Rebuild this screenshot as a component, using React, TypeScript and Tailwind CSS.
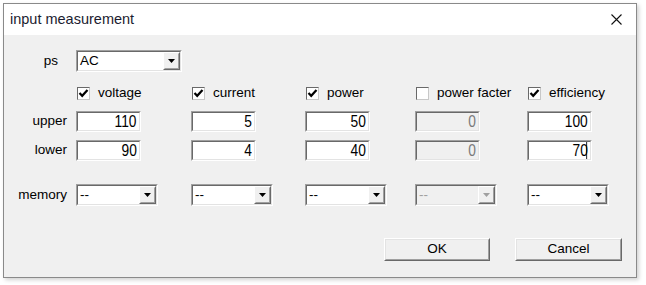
const ui = "font-['Liberation_Sans',Arial,sans-serif]";

const cols = "grid grid-cols-[115px_114px_110px_112px_auto]";

function Sunken({
  className = "",
  disabled = false,
  children,
}: {
  className?: string;
  disabled?: boolean;
  children?: React.ReactNode;
}) {
  return (
    <div
      className={`border border-t-[#a0a0a0] border-l-[#a0a0a0] border-b-white border-r-white ${className}`}
    >
      <div
        className={`h-full border border-t-[#696969] border-l-[#696969] border-b-[#e3e3e3] border-r-[#e3e3e3] ${
          disabled ? "bg-[#f0f0f0]" : "bg-white"
        }`}
      >
        {children}
      </div>
    </div>
  );
}

function Arrow({ disabled = false }: { disabled?: boolean }) {
  return (
    <div className="w-[17px] h-full border border-t-white border-l-white border-b-[#696969] border-r-[#696969] bg-[#f0f0f0]">
      <div className="h-full flex items-center justify-center border border-t-[#f0f0f0] border-l-[#f0f0f0] border-b-[#a0a0a0] border-r-[#a0a0a0]">
        <svg width="7" height="4" viewBox="0 0 7 4">
          <path d="M0 0H7L3.5 4Z" fill={disabled ? "#a0a0a0" : "#000"} />
        </svg>
      </div>
    </div>
  );
}

function Select({
  value,
  width,
  disabled = false,
}: {
  value: string;
  width: string;
  disabled?: boolean;
}) {
  return (
    <Sunken className={`${width} h-[22px]`} disabled={disabled}>
      <div className="h-full flex">
        <div
          className={`flex-1 flex items-center pl-[2px] text-[13.5px] ${
            disabled ? "text-[#a0a0a0]" : "text-black"
          }`}
        >
          {value}
        </div>
        <Arrow disabled={disabled} />
      </div>
    </Sunken>
  );
}

function NumBox({
  value,
  disabled = false,
  caret = false,
}: {
  value: string;
  disabled?: boolean;
  caret?: boolean;
}) {
  return (
    <Sunken className="w-[65px] h-[21px]" disabled={disabled}>
      <div
        className={`h-full flex items-center justify-end pr-[2px] text-[16px] leading-none ${
          disabled ? "text-[#7a7a7a]" : "text-black"
        }`}
      >
        <span className="relative inline-block origin-right scale-x-[0.86]">
          {value}
          {caret && (
            <span className="absolute right-[1px] top-[-1px] w-px h-[17px] bg-black" />
          )}
        </span>
      </div>
    </Sunken>
  );
}

function Check({ label, checked }: { label: string; checked: boolean }) {
  return (
    <div className="flex items-center ml-[1px] h-[13px]">
      <div className="w-[13px] h-[13px] border border-t-[#696969] border-l-[#696969] border-b-[#c8c8c8] border-r-[#c8c8c8] bg-white flex items-center justify-center">
        {checked && (
          <svg width="11" height="11" viewBox="0 0 11 11">
            <path d="M1.5 5L4.2 7.8L9.5 2" stroke="#000" strokeWidth="2.2" fill="none" />
          </svg>
        )}
      </div>
      <span className="ml-[8px] text-[13.5px] text-black">{label}</span>
    </div>
  );
}

function Button({ label, width }: { label: string; width: string }) {
  return (
    <div className={`${width} h-[23px] border border-t-white border-l-white border-b-[#696969] border-r-[#696969]`}>
      <div className="h-full flex items-center justify-center border border-t-[#e3e3e3] border-l-[#e3e3e3] border-b-[#a0a0a0] border-r-[#a0a0a0] bg-[#f0f0f0] text-[13.5px] text-black">
        {label}
      </div>
    </div>
  );
}

function Label({ text, pr = "pr-[9px]" }: { text: string; pr?: string }) {
  return (
    <div className={`w-[72px] shrink-0 text-right text-[13.5px] text-black ${pr}`}>{text}</div>
  );
}

export default function App() {
  return (
    <div className={`w-[646px] h-[285px] bg-white pt-[3px] pl-[3px] ${ui}`}>
      <div className="w-[634px] h-[275px] border border-[#8a8a8a] bg-[#f0f0f0] flex flex-col shadow-[2px_2px_4px_rgba(0,0,0,0.18)]">
        {/* title bar */}
        <div className="h-[31px] bg-white flex items-center justify-between pl-[6px] pr-[14px] shrink-0">
          <span className="text-[14.5px] text-[#1c1c30] pt-[1px]">input measurement</span>
          <svg width="11" height="11" viewBox="0 0 11 11">
            <path d="M0.5 0.5L10.5 10.5M10.5 0.5L0.5 10.5" stroke="#111" strokeWidth="1.1" />
          </svg>
        </div>

        <div className="flex flex-col pt-[15px]">
          {/* ps */}
          <div className="flex items-center h-[22px]">
            <Label text="ps" pr="pr-[18px]" />
            <Select value="AC" width="w-[106px]" />
          </div>

          {/* checkboxes */}
          <div className="flex items-center mt-[15px]">
            <div className="w-[72px] shrink-0" />
            <div className={cols}>
              <Check label="voltage" checked />
              <Check label="current" checked />
              <Check label="power" checked />
              <Check label="power facter" checked={false} />
              <Check label="efficiency" checked />
            </div>
          </div>

          {/* upper */}
          <div className="flex items-center mt-[11px]">
            <Label text="upper" />
            <div className={cols}>
              <NumBox value="110" />
              <NumBox value="5" />
              <NumBox value="50" />
              <NumBox value="0" disabled />
              <NumBox value="100" />
            </div>
          </div>

          {/* lower */}
          <div className="flex items-center mt-[8px]">
            <Label text="lower" />
            <div className={cols}>
              <NumBox value="90" />
              <NumBox value="4" />
              <NumBox value="40" />
              <NumBox value="0" disabled />
              <NumBox value="70" caret />
            </div>
          </div>

          {/* memory */}
          <div className="flex items-center mt-[23px]">
            <Label text="memory" />
            <div className={cols}>
              <Select value="--" width="w-[82px]" />
              <Select value="--" width="w-[82px]" />
              <Select value="--" width="w-[82px]" />
              <Select value="--" width="w-[82px]" disabled />
              <Select value="--" width="w-[82px]" />
            </div>
          </div>

          {/* buttons */}
          <div className="flex justify-end gap-[25px] mt-[32px] pr-[14px]">
            <Button label="OK" width="w-[106px]" />
            <Button label="Cancel" width="w-[107px]" />
          </div>
        </div>
      </div>
    </div>
  );
}
